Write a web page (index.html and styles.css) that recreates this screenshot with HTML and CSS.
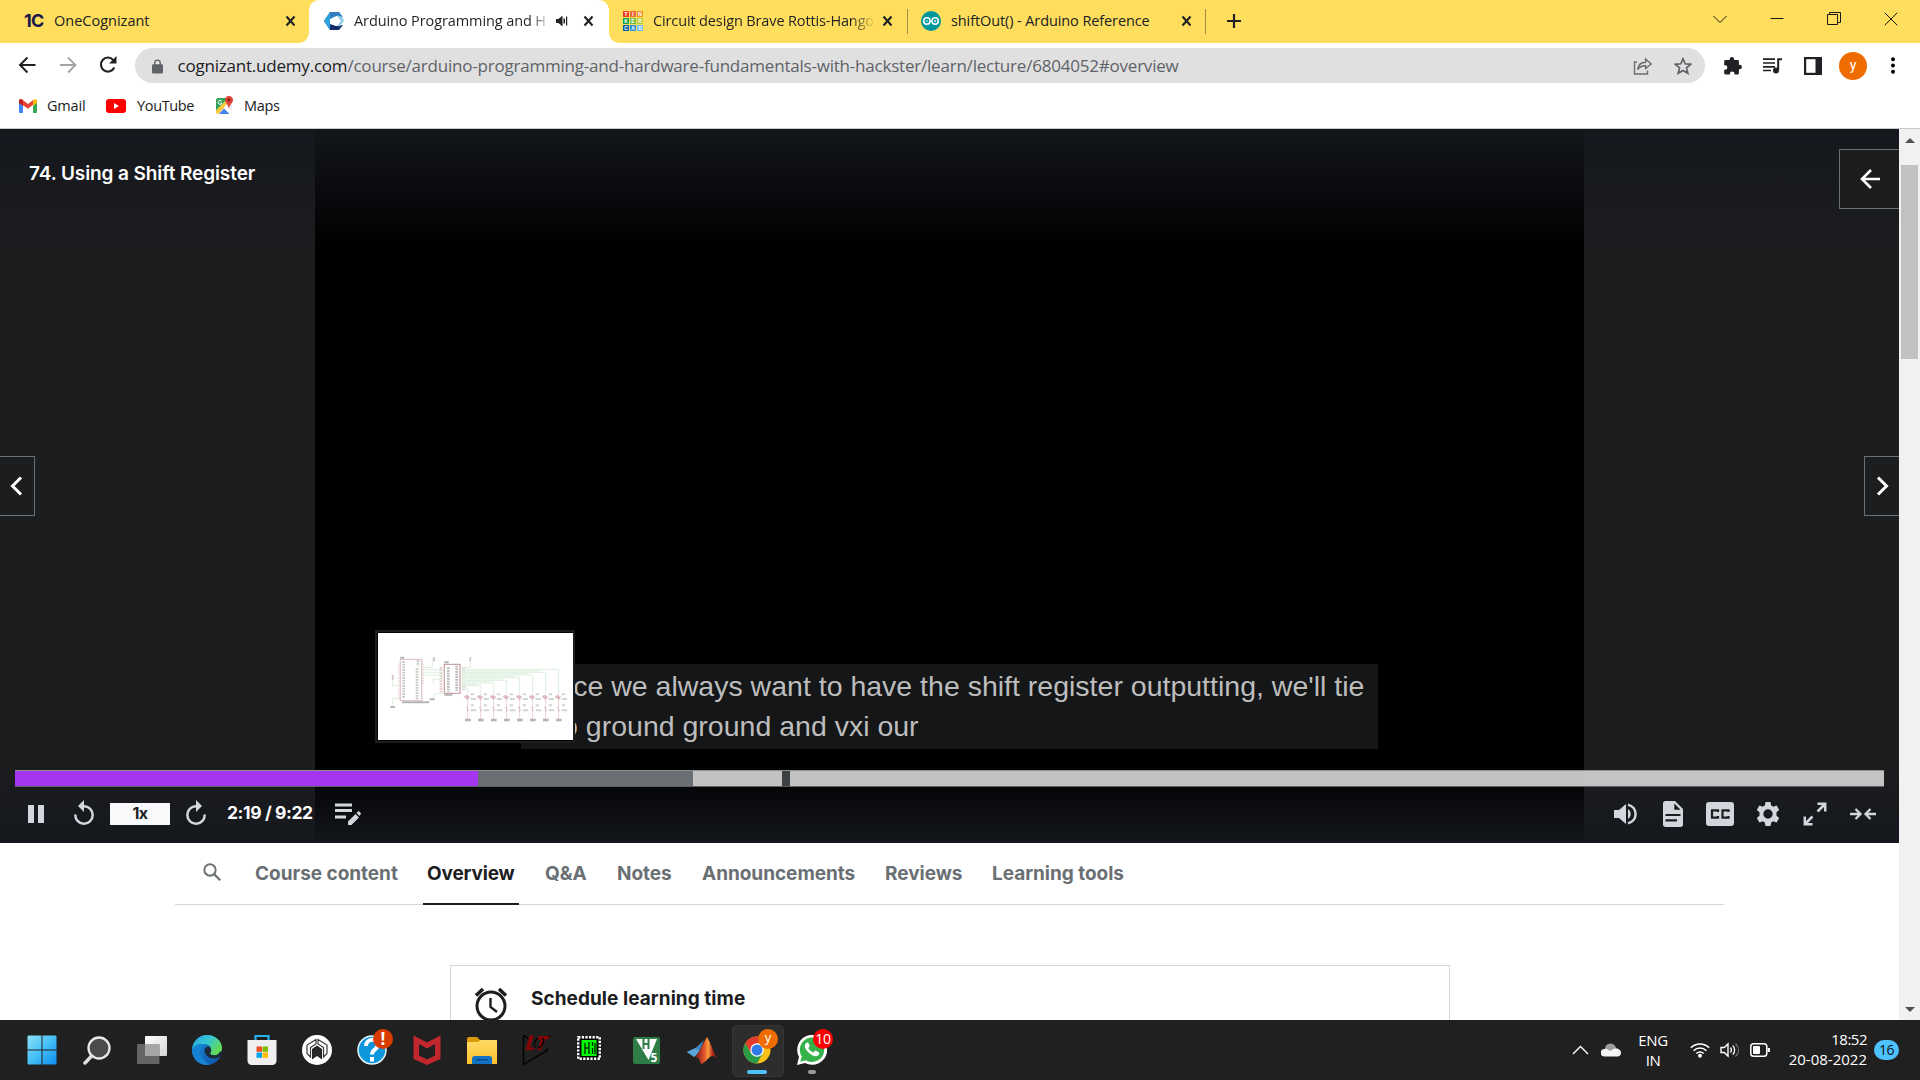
FILE: index.html
```html
<!DOCTYPE html>
<html lang="en">
<head>
<meta charset="utf-8">
<title>Arduino Programming and Hardware Fundamentals</title>
<link rel="stylesheet" href="styles.css">
</head>
<body>
<svg width="0" height="0" class="defs">
  <defs>
    <linearGradient id="gWin" x1="0" y1="0" x2="1" y2="1"><stop offset="0" stop-color="#8ee1fb"/><stop offset=".5" stop-color="#45bff5"/><stop offset="1" stop-color="#0a8df0"/></linearGradient>
    <linearGradient id="gEdgeTop" x1="0" y1="0" x2="1" y2=".6"><stop offset="0" stop-color="#2aa5e0"/><stop offset=".5" stop-color="#34c6d6"/><stop offset="1" stop-color="#66dc4e"/></linearGradient>
    <linearGradient id="gEdgeLow" x1="0" y1="0" x2="1" y2="1"><stop offset="0" stop-color="#1b8fdc"/><stop offset="1" stop-color="#0d4fa6"/></linearGradient>
    <linearGradient id="gFolder" x1="0" y1="0" x2="0" y2="1"><stop offset="0" stop-color="#ffdb67"/><stop offset="1" stop-color="#fcc02d"/></linearGradient>
    <linearGradient id="gTask" x1="0" y1="0" x2="1" y2="1"><stop offset="0" stop-color="#fff"/><stop offset="1" stop-color="#d5d5d5"/></linearGradient>
    <linearGradient id="gMat" x1="0" y1="0" x2="1" y2="0"><stop offset="0" stop-color="#5c1310"/><stop offset=".45" stop-color="#e5532d"/><stop offset=".62" stop-color="#f9a13c"/><stop offset=".8" stop-color="#b42a1c"/><stop offset="1" stop-color="#7a1713"/></linearGradient>
    <path id="x" d="M1.500 1.500l8 9M9.500 1.500l-8 9" fill="none" stroke="#202124" stroke-width="2.100"/>
  </defs>
</svg>

<header class="tabstrip">
  <div class="tab tab-one">
    <span class="one-logo">1C</span>
    <span class="tab-title wide">OneCognizant</span>
    <svg class="close" width="11" height="12"><use href="#x"/></svg>
  </div>
  <div class="tab tab-active">
    <svg width="20" height="20" viewBox="0 0 20 20"><path d="M6 1h9l-9 5v8l9 5H6L0 10z" fill="#1d4f91"/><path d="M6 1h9l4 5-6-1-7 3z" fill="#2f7fc0"/><path d="M0 10L6 1v18z" fill="#2aa3dd"/><path d="M6 13l6 2 7-1-4 5H6z" fill="#152f6b"/><path d="M13 4l6 3 .8 3L15 16z" fill="#8ecbe4"/><path d="M8 7l5-2 4 5-4 5-5-2z" fill="#fff"/></svg>
    <span class="tab-title fade-white">Arduino Programming and H</span>
    <svg class="speaker" width="13" height="12" viewBox="0 0 13 12"><path d="M0 4h2.500l4-3.600v11.200L2.500 8H0zM7.500 3v6l1.500-1V4z" fill="#202124"/><path d="M10.600 1.500v9" stroke="#202124" stroke-width="1.200"/></svg>
    <svg class="close" width="11" height="12"><use href="#x"/></svg>
  </div>
  <div class="tab tab-tinker">
    <span class="tinker"><i class="t1">T</i><i class="t2">I</i><i class="t3">N</i><i class="t4">K</i><i class="t5">E</i><i class="t6">R</i><i class="t7">C</i><i class="t8">A</i><i class="t9">D</i></span>
    <span class="tab-title fade-yellow">Circuit design Brave Rottis-Hango</span>
    <svg class="close" width="11" height="12"><use href="#x"/></svg>
  </div>
  <div class="tab tab-shift">
    <svg width="20" height="20" viewBox="0 0 20 20"><circle cx="10" cy="10" r="10" fill="#00979d"/><g fill="none" stroke="#fff" stroke-width="1.500"><circle cx="5.900" cy="10" r="3.200"/><circle cx="14.100" cy="10" r="3.200"/></g><path d="M4.700 10h2.400M12.900 10h2.400M14.100 8.800v2.400" stroke="#fff" stroke-width=".8"/></svg>
    <span class="tab-title">shiftOut() - Arduino Reference</span>
    <svg class="close" width="11" height="12"><use href="#x"/></svg>
  </div>
  <svg class="plus" width="16" height="16" viewBox="0 0 16 16"><path d="M8 1v14M1 8h14" stroke="#202124" stroke-width="2.200"/></svg>
  <div class="window-controls">
    <svg width="14" height="14" viewBox="0 0 14 14"><path d="M.5 4L7 10.500 13.500 4" class="thin"/></svg>
    <svg width="14" height="14" viewBox="0 0 14 14"><path d="M.5 6.500h13" class="thin"/></svg>
    <svg width="14" height="14" viewBox="0 0 14 14"><path d="M.5 2.500h10v10H.5zM2.500 2.500v-2h11v10h-3" class="thin"/></svg>
    <svg width="14" height="14" viewBox="0 0 14 14"><path d="M.7.7l12.600 12.600M13.300.7L.7 13.300" class="thin"/></svg>
  </div>
</header>

<div class="toolbar">
  <nav class="nav-icons">
    <svg width="18" height="18" viewBox="0 0 18 18"><path d="M17 9H2M9 1.500L1.500 9 9 16.500" transform="translate(.5 0)" fill="none" stroke="#202124" stroke-width="2"/></svg>
    <svg width="18" height="18" viewBox="0 0 18 18"><path d="M1 9h15M9 1.500L16.500 9 9 16.500" fill="none" stroke="#a3a3a3" stroke-width="1.800"/></svg>
    <svg width="18" height="18" viewBox="0 0 18 18"><path d="M15.300 11.500A7 7 0 1 1 14.500 4.300" fill="none" stroke="#202124" stroke-width="2.100"/><path d="M17.500 0v7.400h-7.400z" fill="#202124"/></svg>
  </nav>
  <div class="omnibox">
    <svg width="11" height="15" viewBox="0 0 12 15"><rect y="5" width="12" height="10" rx="1.300" fill="#5f6368"/><path d="M3 6V3.600a3 3 0 0 1 6 0V6" fill="none" stroke="#5f6368" stroke-width="1.500"/></svg>
    <span class="url"><b>cognizant.udemy.com</b>/course/arduino-programming-and-hardware-fundamentals-with-hackster/learn/lecture/6804052#overview</span>
    <svg class="share" width="20" height="18" viewBox="0 0 20 18"><path d="M4 5H1.500v12h13v-3.500" fill="none" stroke="#6a6d70" stroke-width="1.400"/><path d="M4.700 12.500C5.200 8.200 8 5.500 12.600 5.300V2l5.600 5-5.600 4.600V8.700c-3.500-.2-6 1-7.900 3.800z" fill="none" stroke="#6a6d70" stroke-width="1.400"/></svg>
    <svg width="18" height="18" viewBox="0 0 18 18"><path d="M9 1.800l2.200 5 5.500.5-4.200 3.600 1.300 5.300L9 13.400l-4.800 2.800 1.300-5.300-4.200-3.600 5.500-.5z" fill="none" stroke="#5f6368" stroke-width="1.700"/></svg>
  </div>
  <div class="extensions">
    <svg width="18" height="18" viewBox="0 0 18 18"><path d="M1.500 3H5.700V2.300a2.200 2.200 0 0 1 4.400 0V3h3.600c.7 0 1.200.5 1.200 1.200v3.600h.8a2.200 2.200 0 0 1 0 4.400h-.8v4.100c0 .7-.5 1.200-1.200 1.200h-3.200v-.7a2.300 2.300 0 0 0-4.600 0v.7H1.400c-.7 0-1.200-.5-1.200-1.200v-3.500h.9a2.300 2.300 0 0 0 0-4.600H.2V4.200C.2 3.500.8 3 1.500 3z" fill="#202124"/></svg>
    <svg width="20" height="16" viewBox="0 0 20 16"><path d="M0 1.200h12M0 5h12M0 8.800h12M0 12.500h8" stroke="#202124" stroke-width="1.700"/><path d="M15.200 12V1.200H19" fill="none" stroke="#202124" stroke-width="2"/><circle cx="13" cy="12.500" r="3" fill="#202124"/></svg>
    <svg width="18" height="18" viewBox="0 0 18 18"><rect x="1.100" y="1.100" width="15.800" height="15.800" fill="none" stroke="#202124" stroke-width="2.200"/><path d="M11.500 1h6v16h-6z" fill="#202124"/></svg>
    <span class="avatar">y</span>
    <svg width="4" height="17" viewBox="0 0 4 17"><circle cx="2" cy="2.200" r="2"/><circle cx="2" cy="8.500" r="2"/><circle cx="2" cy="14.800" r="2"/></svg>
  </div>
</div>

<div class="bookmarks">
  <svg width="18" height="14" viewBox="0 0 18 14"><path d="M0 2v10.500C0 13.500.5 14 1.300 14H4V5z" fill="#4285f4"/><path d="M18 2v10.500c0 1-.5 1.500-1.300 1.500H14V5z" fill="#34a853"/><path d="M0 2.200C0 .2 1.800-.5 3.200.6L9 5 14.800.6V5L9 9.700 0 3.500z" fill="#ea4335"/><path d="M0 2v2l4 3V1.200C2-.5 0 .2 0 2z" fill="#c5221f"/><path d="M18 2v2l-4 3V1.200C16-.5 18 .2 18 2z" fill="#fbbc04"/></svg>
  <span class="bm gmail">Gmail</span>
  <svg width="20" height="14" viewBox="0 0 20 14"><rect width="20" height="14" rx="3" fill="#f00"/><path d="M8 4l5 3-5 3z" fill="#fff"/></svg>
  <span class="bm youtube">YouTube</span>
  <svg width="19" height="19" viewBox="0 0 19 19"><rect y="2" width="16" height="16" rx="2" fill="#e8eaed"/><path d="M0 4c0-1 1-2 2-2h10L0 15z" fill="#34a35a"/><path d="M0 14.500l9-9 2.500 2.500L2 18c-1.500 0-2-1-2-2z" fill="#fbc934"/><path d="M3 18l5-5.500 5.500 5.500z" fill="#4285f4"/><path d="M10 8l6 7v1l-2 2-6-6z" fill="#fff"/><path d="M13 0c2.500 0 4 1.800 4 4 0 3-3.300 4-4 9-.7-5-4-6-4-9 0-2.200 1.500-4 4-4z" fill="#e04438"/><circle cx="13" cy="4" r="1.500" fill="#8c1d14"/><path d="M5.500 5A2 2 0 1 0 6 7H4.300" fill="none" stroke="#fff"/></svg>
  <span class="bm maps">Maps</span>
</div>

<div class="viewport">
  <main class="page">
    <section class="player">
      <div class="video"></div>
      <div class="shade"></div>
      <h1 class="lecture-title">74. Using a Shift Register</h1>
      <button class="open-panel"><svg width="20" height="20" viewBox="0 0 20 20"><path d="M20 10H2M11 1L2 10l9 9" fill="none" stroke="#fff" stroke-width="2.600"/></svg></button>
      <button class="side prev"><svg width="13" height="20" viewBox="0 0 13 20"><path d="M11 1.500L2.500 10l8.500 8.500" fill="none" stroke="#fff" stroke-width="3"/></svg></button>
      <button class="side next"><svg width="13" height="20" viewBox="0 0 13 20"><path d="M2 1.500l8.500 8.500L2 18.500" fill="none" stroke="#fff" stroke-width="3"/></svg></button>
      <p class="caption">Since we always want to have the shift register outputting, we'll tie<br>it to ground ground and vxi our</p>
      <div class="preview">
        <svg width="195" height="107" viewBox="0 0 585 321">
          <defs>
            <g id="led"><path d="M0 184V262" stroke="#efd3d6" stroke-width="3"/><path d="M-11 191l6-4 11 4-6 9zM0 219l-4 6 7 6-5 6" fill="#dcb6bb" stroke="#e0c0c4" stroke-width="2"/><path d="M9 184h10M9 198h16M9 217h10M9 232h17" stroke="#d2d6d3" stroke-width="6"/><path d="M-8 261H9" stroke="#b4b8b4" stroke-width="8"/></g>
          </defs>
          <g fill="none" stroke="#e3c6c9" stroke-width="4"><path d="M67 79h64v124H67z"/><path d="M199 94h47v87h-47z" stroke="#c9a5aa" stroke-width="4"/></g>
          <g stroke="#c3c7c3" stroke-width="8" stroke-dasharray="5 3"><path d="M77 85v112M120 82v18M117 106v94"/><path d="M211 103v74M236 98v76" stroke="#b9b3b6"/><path d="M189 102v76M257 103v70" stroke="#e3c8cc"/><path d="M63 92v108M135 92v64" stroke="#efdcde" stroke-width="5"/></g>
          <g fill="none" stroke="#dcefde" stroke-width="3"><path d="M133 110h66M133 118h66M133 126h66M133 103h30M163 103v-26M166 150v-10h33M168 196v-14h31M44 134v24h20M44 216v-20h22M250 103h27V76"/><path d="M250 109h292v75M250 118h253v66M250 126h214v58M250 134h175v50M250 142h136v42M250 150h97v34M250 158h58v26M250 165h19v19"/></g>
          <path d="M250 114h240M250 122h200M250 130h160M250 138h125M250 146h85M250 154h50" stroke="#e6f4e8" stroke-width="5"/>
          <g stroke="#b2b6b2" stroke-width="6"><path d="M72 208h82M67 74h12M199 88h13M199 185h24M37 222h14M155 199h15"/><path d="M44 126v14M168 72v13M277 72v13" stroke="#cfc0c3" stroke-width="5"/></g>
          <use href="#led" x="269"/><use href="#led" x="308"/><use href="#led" x="347"/><use href="#led" x="386"/><use href="#led" x="425"/><use href="#led" x="464"/><use href="#led" x="503"/><use href="#led" x="542"/>
        </svg>
      </div>
      <div class="controls">
        <div class="progress"><span class="played"></span><span class="buffered"></span><span class="marker"></span></div>
        <div class="buttons">
          <svg class="c-pause" width="16" height="18" viewBox="0 0 16 18"><path d="M0 0h6v18H0zM10 0h6v18h-6z"/></svg>
          <svg class="c-rew" width="20" height="26" viewBox="0 0 20 26"><path d="M1.300 14.500A8.700 8.700 0 1 0 10 6.300H8" fill="none" stroke="#d1d7dc" stroke-width="2.500"/><path d="M10 0v12L4 6z"/></svg>
          <span class="speed">1x</span>
          <svg class="c-fwd" width="20" height="26" viewBox="0 0 20 26"><path d="M18.700 14.500A8.700 8.700 0 1 1 10 6.300h2" fill="none" stroke="#d1d7dc" stroke-width="2.500"/><path d="M10 0v12l6-6z"/></svg>
          <span class="time">2:19 / 9:22</span>
          <svg class="c-note" width="26" height="22" viewBox="0 0 26 22"><path d="M0 .5h17v3H0zM0 6h17v3H0zM0 12.500h11v3H0zM13 22v-3.500l7.500-7.500 3.500 3.500-7.500 7.500zM21.500 10l1.300-1.300c.5-.5 1.200-.5 1.700 0l1 1c.5.500.5 1.200 0 1.700L24.500 13z"/></svg>
          <div class="right-buttons">
            <svg width="24" height="22" viewBox="0 0 24 22"><path d="M0 7h5L12 1v20l-7-6H0zM14 6v10c1.700-1 2.700-2.800 2.700-5S15.700 7 14 6z"/><path d="M14 1.700C18.500 2.800 21.600 6.400 21.600 11S18.500 19.200 14 20.300" fill="none" stroke="#d1d7dc" stroke-width="2.500"/></svg>
            <svg width="20" height="26" viewBox="0 0 20 26"><path d="M2.500 0H12l8 8v15.500c0 1.400-1 2.500-2.500 2.500h-15C1 26 0 25 0 23.500v-21C0 1 1 0 2.500 0z"/><path d="M11.300 2.500v6.300h6.300z" fill="#1c1d1f"/><path d="M2.500 14h15M2.500 19.300H14" stroke="#1c1d1f" stroke-width="2.200"/></svg>
            <svg class="c-cc" width="28" height="24" viewBox="0 0 28 24"><rect width="28" height="24" rx="3"/><path d="M12 10V8.300H6v7.400h6V14M22.500 10V8.300h-6v7.400h6V14" fill="none" stroke="#1c1d1f" stroke-width="2.200"/></svg>
            <svg width="24" height="24" viewBox="0 0 24 24"><path fill-rule="evenodd" d="M9.500 0h5l.7 3.500 2 1.200 3.400-1.200L23.200 8l-2.700 2.300v3.400L23.200 16l-2.600 4.500-3.400-1.200-2 1.200-.7 3.500h-5l-.7-3.500-2-1.200-3.400 1.200L.8 16l2.700-2.300v-3.400L.8 8l2.600-4.500 3.400 1.200 2-1.200zM12 7.300a4.700 4.700 0 1 0 0 9.400 4.700 4.700 0 0 0 0-9.400z"/></svg>
            <svg class="c-full" width="24" height="24" viewBox="0 0 24 24"><path d="M14.500 1.800h7.700v7.700M22 2l-7.500 7.500M9.500 22.200H1.800v-7.700M2 22l7.500-7.500" fill="none" stroke="#d1d7dc" stroke-width="2.500"/></svg>
            <svg width="26" height="12" viewBox="0 0 26 12"><path d="M0 6h10M5.500 1l5 5-5 5M26 6H16M20.500 1l-5 5 5 5" fill="none" stroke="#d1d7dc" stroke-width="2.300"/></svg>
          </div>
        </div>
      </div>
    </section>
    <nav class="course-tabs">
      <svg width="18" height="18" viewBox="0 0 18 18"><circle cx="7" cy="7" r="5.700" fill="none" stroke="#6a6f73" stroke-width="1.900"/><path d="M11 11l6.200 6.200" stroke="#6a6f73" stroke-width="2.200"/></svg>
      <a class="w-content">Course content</a>
      <a class="w-overview current">Overview</a>
      <a class="w-qa">Q&amp;A</a>
      <a class="w-notes">Notes</a>
      <a class="w-ann">Announcements</a>
      <a class="w-reviews">Reviews</a>
      <a class="w-tools">Learning tools</a>
    </nav>
    <section class="schedule">
      <svg width="34" height="36" viewBox="0 0 34 36"><circle cx="17" cy="20" r="14" fill="none" stroke="#1c1d1f" stroke-width="3"/><path d="M2 9.500L9 3M32 9.500L25 3" stroke="#1c1d1f" stroke-width="3.500"/><path d="M16.500 12v9l6.500 5" fill="none" stroke="#1c1d1f" stroke-width="2.400"/></svg>
      <h2>Schedule learning time</h2>
    </section>
  </main>
  <aside class="scrollbar">
    <svg width="10" height="5" viewBox="0 0 10 5"><path d="M0 5l5-5 5 5z"/></svg>
    <span class="thumb"></span>
    <svg width="10" height="5" viewBox="0 0 10 5"><path d="M0 0l5 5 5-5z"/></svg>
  </aside>
</div>

<footer class="taskbar">
  <div class="apps">
    <span class="app"><svg width="30" height="30" viewBox="0 0 30 30"><path d="M2 .5h12.500v14H.5V2C.5 1 1 .5 2 .5zM15.500.5H28c1 0 1.500.5 1.500 1.500v12.500h-14zM.5 15.500h14v14H2c-1 0-1.500-.5-1.500-1.500zM15.500 15.500h14V28c0 1-.5 1.500-1.500 1.500H15.500z" fill="url(#gWin)"/></svg></span>
    <span class="app"><svg width="28" height="30" viewBox="0 0 28 30"><path d="M2 28l8-8.500" stroke="#dcdfe3" stroke-width="3.500" stroke-linecap="round"/><circle cx="16" cy="13" r="10.500" fill="#4a4b4d" stroke="#e6e8ea" stroke-width="2.300"/></svg></span>
    <span class="app"><svg width="30" height="28" viewBox="0 0 30 28"><rect x="8" width="22" height="20" rx="1" fill="url(#gTask)"/><rect y="8" width="22.500" height="20" rx="1" fill="#6d6d6d" opacity=".9"/><path d="M8 8h14.500v12H8z" fill="#a5a5a5"/></svg></span>
    <span class="app"><svg width="30" height="30" viewBox="0 0 30 30"><circle cx="15" cy="15" r="15" fill="url(#gEdgeLow)"/><path d="M.5 12C2 5 8 0 15 0c8.500 0 15 6 15 13 0 4.500-3.500 7.300-7.500 7.300-3.500 0-5-1.300-4-2.800 1.600-2.700.5-8.500-6-8.500C7 9 2 11 .5 15z" fill="url(#gEdgeTop)"/><path d="M.1 14C2 10 8 7.700 13 9.500c-5 2-6.500 9-2 14.500 2 2.500 4.500 4.500 7.500 5.500C8 32-.7 24 .1 14z" fill="#1683d2"/><path d="M12.500 14.500c-.5 4.500 3.500 9 9.500 9 3 0 5.500-1 6.500-1.700l1.500-1v-4l-2-.3c-1.500 3-3.500 3.800-5.500 3.800-3.500 0-5-1.300-4-2.800 1.500-2 .5-5-1.500-6-2 0-4 1-4.500 3z" fill="#1c2a38"/></svg></span>
    <span class="app"><svg width="30" height="30" viewBox="0 0 30 30"><path d="M8.500 6V1h13v5" fill="none" stroke="#27b1ee" stroke-width="2.200"/><path d="M.5 5h29v20.500c0 2.500-1.500 4.500-4.500 4.500H5C2 30 .5 28 .5 25.500z" fill="#efefef"/><path d="M9.500 11.500H15v5.300H9.500z" fill="#f25022"/><path d="M15.500 11.500H21v5.300h-5.500z" fill="#7fba00"/><path d="M9.500 17.500H15v5.300H9.500z" fill="#00a4ef"/><path d="M15.500 17.500H21v5.300h-5.500z" fill="#ffb900"/></svg></span>
    <span class="app"><svg width="30" height="30" viewBox="0 0 30 30"><circle cx="15" cy="15" r="15" fill="#fff"/><path d="M14 4.500L5 10v8.500l3.500 3.500V12.500L14 9zM16 4.500L25 10v8.500L21.500 22v-9.500L16 9z" fill="none" stroke="#3a3a3a" stroke-width="1.200"/><path d="M10 24.500V14l5-3.500 5 3.500v10.500L15 21z" fill="#262626"/></svg></span>
    <span class="app badge-host"><svg width="30" height="30" viewBox="0 0 30 30"><circle cx="15" cy="15" r="14" fill="#0c96dc" stroke="#e9f5fb" stroke-width="1.500"/><path d="M9 11c0-8 12-8 12-1.500 0 5-6 4.500-6 10M15 22v4.500" fill="none" stroke="#fff" stroke-width="4"/></svg><i class="badge alert">!</i></span>
    <span class="app"><svg width="28" height="30" viewBox="0 0 28 30"><path d="M.5.5L14 7.500 27.500.5V24L14 30 .5 24zM6 9v11.500l8 4 8-4V9l-8 4.500z" fill="#c1272d" fill-rule="evenodd"/></svg></span>
    <span class="app"><svg width="30" height="27" viewBox="0 0 30 27"><path d="M0 2C0 .8.800 0 2 0h8l3 3v5H0z" fill="#d99a06"/><path d="M0 5h11l2.500-2H30v24H0z" fill="url(#gFolder)"/><path d="M5 27v-5c0-2 1-3 3-3h14c2 0 3 1 3 3v5z" fill="#1273c4"/><path d="M9 22.800h12" stroke="#0b4c8c" stroke-width="1.500"/></svg></span>
    <span class="app"><svg width="30" height="30" viewBox="0 0 30 30"><path d="M1.500 0v29.500L25 15.500V13M1.500 0L7 4" fill="none" stroke="#050505" stroke-width="1.600"/><path d="M7.500.5h4.500l-4 12h5l-.8 2.500H3.500zM17 1h11.500l-2.500 3-2.500.3-4.500 10.700h-4l4-10h-4z" fill="#850507"/><path d="M16 3.500c-4 2-5 6-2.500 9M20 3c3 2 2 7-4 10" fill="none" stroke="#050505" stroke-width="1.500"/><path d="M26 1h3.500" stroke="#050505"/></svg></span>
    <span class="app"><svg class="chip" width="24" height="24" viewBox="0 0 24 24"><rect x="1.200" y="1.200" width="21.600" height="21.600" fill="none" stroke="#fff" stroke-width="2.400" stroke-dasharray="2.200 1.400"/><path d="M3 3h18v18H3z" fill="#000"/><path d="M4.500 4h15v16h-15z" fill="#0f0"/><path d="M8 7v11M8 12h4M12 6v12M15.500 6v4M15.500 12v6M18 7v11" stroke="#022d02" stroke-width="1.400"/></svg></span>
    <span class="app"><svg width="27" height="27" viewBox="0 0 27 27"><rect width="27" height="27" rx="2" fill="#2e7d46"/><path d="M3 2h21l-8.500 21z" fill="#fff"/><path d="M10.500 2v10M15.500 2v10M10.500 7h5" stroke="#2e7d46" stroke-width="2"/><text x="17.500" y="24.500" class="five">5</text></svg></span>
    <span class="app"><svg width="30" height="28" viewBox="0 0 30 28"><path d="M0 16l8.500-4 5.500-5 3-3-5 12-5 5z" fill="#3f84bd"/><path d="M0 16l8.500-4 4 3-5 6z" fill="#5ba5d8"/><path d="M7 21c4-1 8-12 13-20 4 6 6 15 10 21-3-2-5-3-7-1-3 2-5 6-9 7-1-4-3-7-7-7z" fill="url(#gMat)"/></svg></span>
    <span class="app active badge-host"><svg class="chrome" width="28" height="28" viewBox="0 0 28 28"><circle cx="14" cy="14" r="13.500" fill="#fbc116"/><path d="M2.300 7.200A13.500 13.500 0 0 1 25.700 7.200H14L8.200 17.400z" fill="#e33b2e"/><path d="M2.300 7.200A13.500 13.500 0 0 0 14 27.500L19.800 17.400H8.200z" fill="#2a9b49"/><circle cx="14" cy="14" r="6.700" fill="#fff"/><circle cx="14" cy="14" r="5.500" fill="#2f7bea"/></svg><i class="badge profile">y</i></span>
    <span class="app running badge-host"><svg width="30" height="30" viewBox="0 0 30 30"><path d="M0 30l2-8A15 15 0 1 1 8 28z" fill="#fff"/><path d="M3.200 26.700l1.600-5.200a12.200 12.200 0 1 1 4 3.800z" fill="#35b24a"/><path d="M10 7.500c-3 1.500-3 5.500 1 9.500s8.500 6 11 2.500l.3-2-4-2-2 2c-2.500-1-4.500-3-5-4.500l1.500-2-1.600-3.500z" fill="#fff"/></svg><i class="badge count">10</i></span>
  </div>
  <div class="tray">
    <svg class="t-up" width="17" height="10" viewBox="0 0 17 10"><path d="M1 9l7.500-7.500L16 9" fill="none" stroke="#fff" stroke-width="1.400"/></svg>
    <svg class="t-cloud" width="20" height="14" viewBox="0 0 20 14"><path d="M4 5.500a5.600 5.600 0 0 1 10.500-2l2 4L4 10z" fill="#9b9b9b"/><path d="M3.500 13.500a3.700 3.700 0 0 1 0-7.500c2-.5 4 .5 5 2l5-2.500c3.500-.5 6.500 1 6.500 4.500 0 2-1.500 3.500-3.500 3.500z" fill="#f5f5f5"/></svg>
    <div class="lang">ENG<br>IN</div>
    <svg class="t-wifi" width="20" height="16" viewBox="0 0 20 16"><g fill="none" stroke="#fff" stroke-width="1.600"><path d="M.8 5.800a13 13 0 0 1 18.400 0M3.600 8.700a9 9 0 0 1 12.800 0M6.300 11.500a5.300 5.300 0 0 1 7.400 0"/></g><circle cx="10" cy="13.800" r="2" fill="#fff"/></svg>
    <svg class="t-vol" width="20" height="16" viewBox="0 0 20 16"><path d="M1 5.500h3.300L8 2v12l-3.700-3.500H1z" fill="none" stroke="#fff" stroke-width="1.400"/><path d="M10.500 5.500c1.200 1.500 1.200 3.500 0 5M12.800 3.500c2.400 2.500 2.400 6.500 0 9" fill="none" stroke="#fff" stroke-width="1.300"/><path d="M15.500 1.500c4 4 4 9 0 13" fill="none" stroke="#777" stroke-width="1.200"/></svg>
    <svg class="t-bat" width="20" height="14" viewBox="0 0 20 14"><rect x=".8" y=".8" width="16" height="12.400" rx="2.800" fill="none" stroke="#fff" stroke-width="1.500"/><rect x="3" y="3" width="7" height="8" rx="1" fill="#fff"/><path d="M18.800 5v4" stroke="#fff" stroke-width="2.200"/></svg>
    <div class="clock">18:52<br><span class="date">20-08-2022</span></div>
    <span class="notif">16</span>
  </div>
</footer>
</body>
</html>
```
FILE: styles.css
```css
* { box-sizing: border-box; }
body {
  margin: 0;
  width: 1920px;
  height: 1080px;
  overflow: hidden;
  display: flex;
  flex-direction: column;
  font-family: "Open Sans", "Noto Sans", sans-serif;
  color: #202124;
  background: #fff;
}
svg { display: block; flex: none; }
.defs { position: absolute; }

/* Browser tabs */
.tabstrip { height: 43px; background: #ffde5d; display: flex; align-items: stretch; flex: none; }
.tab { display: flex; align-items: center; height: 43px; padding-bottom: 1px; font-size: 14.500px; }
.tab-one { width: 309px; padding-left: 24px; padding-right: 13px; }
.tab-active { width: 300px; padding-left: 15px; padding-right: 15px; background: #fff; border-radius: 10px 10px 0 0; position: relative; }
.tab-active::before, .tab-active::after { content: ""; position: absolute; bottom: 0; width: 10px; height: 10px; }
.tab-active::before { left: -10px; background: radial-gradient(circle at 0 0, transparent 9.500px, #fff 10px); }
.tab-active::after { right: -10px; background: radial-gradient(circle at 100% 0, transparent 9.500px, #fff 10px); }
.tab-tinker { width: 299px; padding-left: 14px; padding-right: 15px; }
.tab-shift { width: 298px; padding-left: 13px; padding-right: 14px; }
.tab-tinker, .tab-shift { background: linear-gradient(#a08d48, #a08d48) right 9px / 1px 25px no-repeat; }
.tab-title { margin-left: 10px; white-space: nowrap; letter-spacing: -0.1px; line-height: 22px; flex: 1; min-width: 0; }
.tab-title.wide { letter-spacing: 0; }
.tab .close { margin-left: 14px; }
.tab .speaker { margin-left: 9px; }
.tab-title.fade-white { letter-spacing: -0.1px; background: linear-gradient(90deg, #202124 91%, #d8d8d8 100%); -webkit-background-clip: text; background-clip: text; color: transparent; }
.tab-title.fade-yellow { letter-spacing: -0.13px; background: linear-gradient(90deg, #202124 90%, #e8cc5d 100%); -webkit-background-clip: text; background-clip: text; color: transparent; }
.tab-tinker .close { margin-left: 9px; }
.one-logo { width: 20px; font: 700 18px/20px "Inter", sans-serif; letter-spacing: -0.8px; color: #1b1b4b; }
.tinker { width: 20px; height: 20px; display: grid; grid-template-columns: repeat(3, 6px); grid-auto-rows: 6px; gap: 1px; }
.tinker i { font: 700 5px/6px "Liberation Sans", sans-serif; color: #fff; text-align: center; }
.t1 { background: #f03e23; } .t2 { background: #f4673a; } .t3 { background: #f4912e; }
.t4 { background: #12a04b; } .t5 { background: #72bf44; } .t6 { background: #b4cf3c; }
.t7 { background: #0b61a8; } .t8 { background: #2d8fd5; } .t9 { background: #6ebbe8; }
.plus { margin: 13px 0 0 20px; }
.window-controls { margin-left: auto; padding: 12px 22px 0 0; display: flex; gap: 43px; }
.thin { fill: none; stroke: #1a1a1a; stroke-width: 1; }

/* Address bar */
.toolbar { height: 45px; display: flex; align-items: flex-start; flex: none; }
.nav-icons { width: 135px; padding: 13px 0 0 18px; display: flex; gap: 22.500px; }
.omnibox { width: 1570px; height: 35px; margin-top: 5px; border-radius: 18px; background: #e0e0e0; display: flex; align-items: center; padding: 0 13px 0 17px; }
.url { margin-left: 14.500px; flex: 1; font-size: 17px; line-height: 24px; letter-spacing: -0.21px; white-space: nowrap; color: #5f6368; }
.url b { font-weight: 400; color: #202124; }
.omnibox svg:first-child { margin-top: 2px; }
.share { margin-right: 21px; }
.extensions { display: flex; align-items: center; height: 45px; padding-left: 19px; }
.extensions svg:nth-child(2) { margin-left: 21px; }
.extensions svg:nth-child(3) { margin-left: 20.500px; }
.avatar { width: 28px; height: 28px; margin: 0 23.500px 0 17.500px; border-radius: 50%; background: #ef6c00; color: #fff; font: 14px/26px Roboto, sans-serif; text-align: center; }

/* Bookmarks */
.bookmarks { height: 41px; border-bottom: 1px solid #c8c8c8; display: flex; align-items: center; padding: 0 0 5px 19px; flex: none; font-size: 14.500px; }
.bm { letter-spacing: -0.35px; line-height: 22px; }
.gmail { margin-left: 10px; width: 59px; letter-spacing: -0.2px; }
.youtube { margin-left: 11px; width: 79px; }
.maps { margin-left: 9px; letter-spacing: -0.3px; }

/* Page */
.viewport { height: 891px; display: flex; flex: none; overflow: hidden; }
.page { width: 1899px; height: 891px; overflow: hidden; }
.player { position: relative; height: 714px; background: #1c1d1f; display: flex; flex-direction: column; align-items: center; justify-content: flex-end; }
.video { position: absolute; left: 315px; top: 0; width: 1269px; height: 714px; background: #000; }
.shade { position: absolute; inset: 0; background: linear-gradient(rgba(20, 23, 29, 0.95), rgba(20, 23, 29, 0) 120px, rgba(20, 23, 29, 0) 635px, rgba(20, 23, 29, 0.95)); }
.lecture-title { position: absolute; left: 29px; top: 31px; margin: 0; font: 600 19px/28px "Inter", sans-serif; letter-spacing: -0.1px; color: #fff; white-space: nowrap; }
button { position: absolute; display: flex; align-items: center; padding: 0; background: #1c1d1f; border: 1px solid #6a6f73; }
.open-panel { right: 0; top: 20px; width: 60px; height: 60px; border-right: 0; padding-left: 20px; }
.side { top: 327px; width: 35px; height: 60px; }
.prev { left: 0; border-left: 0; padding-left: 10px; }
.next { right: 0; border-right: 0; padding-left: 11px; }
.caption { position: absolute; left: 521px; top: 535px; width: 857px; height: 85px; margin: 0; padding: 2px 11px; background: #151618; color: #bdbdbd; font: 28.500px/40px "Liberation Sans", Arial, sans-serif; white-space: nowrap; }
.preview { position: absolute; left: 375px; top: 501px; width: 200px; height: 113px; padding: 1px; border: 2px solid #1c1d1f; background: #000; }
.preview svg { background: #fff; width: 195px; height: 107px; }

.controls { position: relative; width: 1869px; height: 73px; }
.progress { height: 17px; display: flex; border-top: 1px solid #8f8f8f; border-bottom: 1px solid #606060; background: rgba(208, 209, 208, 0.93); }
.played { width: 463px; background: #a435f0; }
.buffered { width: 215px; background: #6a6f73; }
.marker { width: 8px; margin-left: 89px; background: #3e4143; }
.buttons { height: 54px; display: flex; align-items: center; fill: #d1d7dc; }
.c-pause { margin-left: 13px; }
.c-rew { margin: -3px 0 0 30px; }
.speed { width: 60px; height: 22px; margin-left: 16px; background: #f7f9fa; color: #1c1d1f; font: 700 16px/21px "Inter", sans-serif; letter-spacing: -0.5px; text-align: center; }
.c-fwd { margin: -3px 0 0 16px; }
.time { width: 86px; margin-left: 21px; color: #fff; font: 700 17.500px/24px "Inter", sans-serif; letter-spacing: -0.4px; white-space: nowrap; position: relative; top: -1px; }
.c-note { margin-left: 22px; }
.right-buttons { margin-left: auto; width: 285px; display: grid; grid-template-columns: repeat(6, 47.500px); justify-items: center; align-items: center; transform: translateX(3px); }
.c-cc, .c-full { margin-right: 2px; }

/* Course tabs */
.course-tabs { width: 1549px; height: 62px; margin-left: 175px; padding-left: 28px; border-bottom: 1px solid #d1d7dc; display: flex; font: 700 19px/62px "Inter", sans-serif; letter-spacing: -0.03px; color: #6a6f73; white-space: nowrap; }
.course-tabs svg { margin: 20px 30px 0 0; }
.course-tabs a { height: 62px; padding: 0 4px; margin-right: 22px; }
.current { color: #1c1d1f; border-bottom: 2px solid #1c1d1f; }
.w-content { width: 150px; }
.w-overview { width: 96px; letter-spacing: -0.15px; }
.w-qa { width: 50px; }
.w-notes { width: 63px; }
.w-ann { width: 161px; }
.w-reviews { width: 85px; }

.schedule { width: 1000px; height: 200px; margin: 60px 0 0 450px; border: 1px solid #d1d7dc; display: flex; align-items: flex-start; padding: 20px 23px; }
.schedule h2 { margin: 0 0 0 23px; font: 700 19px/26px "Inter", sans-serif; letter-spacing: 0.05px; color: #1c1d1f; }

.scrollbar { width: 21px; background: #f1f1f1; display: flex; flex-direction: column; align-items: center; padding: 9px 0 8px; fill: #505050; }
.thumb { width: 17px; height: 194px; margin: 22px 0 auto; background: #c1c1c1; }

/* Taskbar */
.taskbar { height: 60px; background: #202020; display: flex; flex: none; }
.apps { display: flex; padding-left: 14px; align-items: center; }
.app { width: 55px; height: 60px; display: flex; align-items: center; justify-content: center; }
.chip { margin: -5px 5px 0 0; }
.badge-host { position: relative; }
.active::before { content: ""; position: absolute; left: 3px; top: 5px; width: 50px; height: 50px; border-radius: 5px; background: #2d2d2d; border: 1px solid #363636; }
.chrome { position: relative; }
.active::after, .running::after { content: ""; position: absolute; left: 18px; top: 50px; width: 20px; height: 4px; border-radius: 2px; background: #4cc2ff; }
.running::after { left: 24px; width: 8px; background: #9a9a9a; }
.badge { position: absolute; left: 29px; top: 9px; width: 20px; height: 20px; border-radius: 50%; font: 14px/20px "Open Sans", sans-serif; color: #fff; text-align: center; }
.alert { background: #da3b01; font-weight: 700; font-size: 17px; }
.profile { background: #ef6c00; line-height: 16px; font-size: 13px; }
.count { background: #f00; letter-spacing: -0.3px; }
.five { font: 700 12px "Open Sans", sans-serif; fill: #fff; }

.tray { margin-left: auto; display: flex; align-items: center; color: #fff; font-size: 15px; line-height: 20px; padding-right: 21px; }
.t-cloud { margin-left: 12px; }
.lang { width: 40px; margin-left: 12px; text-align: center; letter-spacing: -0.4px; }
.t-wifi { margin-left: 17px; }
.t-vol { margin-left: 10px; }
.t-bat { margin-left: 10px; }
.clock { width: 97px; padding-bottom: 2px; text-align: right; letter-spacing: -0.5px; white-space: nowrap; }
.date { letter-spacing: 0; }
.notif { width: 25px; height: 20px; margin-left: 7px; border-radius: 10px; background: #4cc2ff; color: #111; font-size: 14px; line-height: 20px; text-align: center; letter-spacing: -0.5px; }
```
